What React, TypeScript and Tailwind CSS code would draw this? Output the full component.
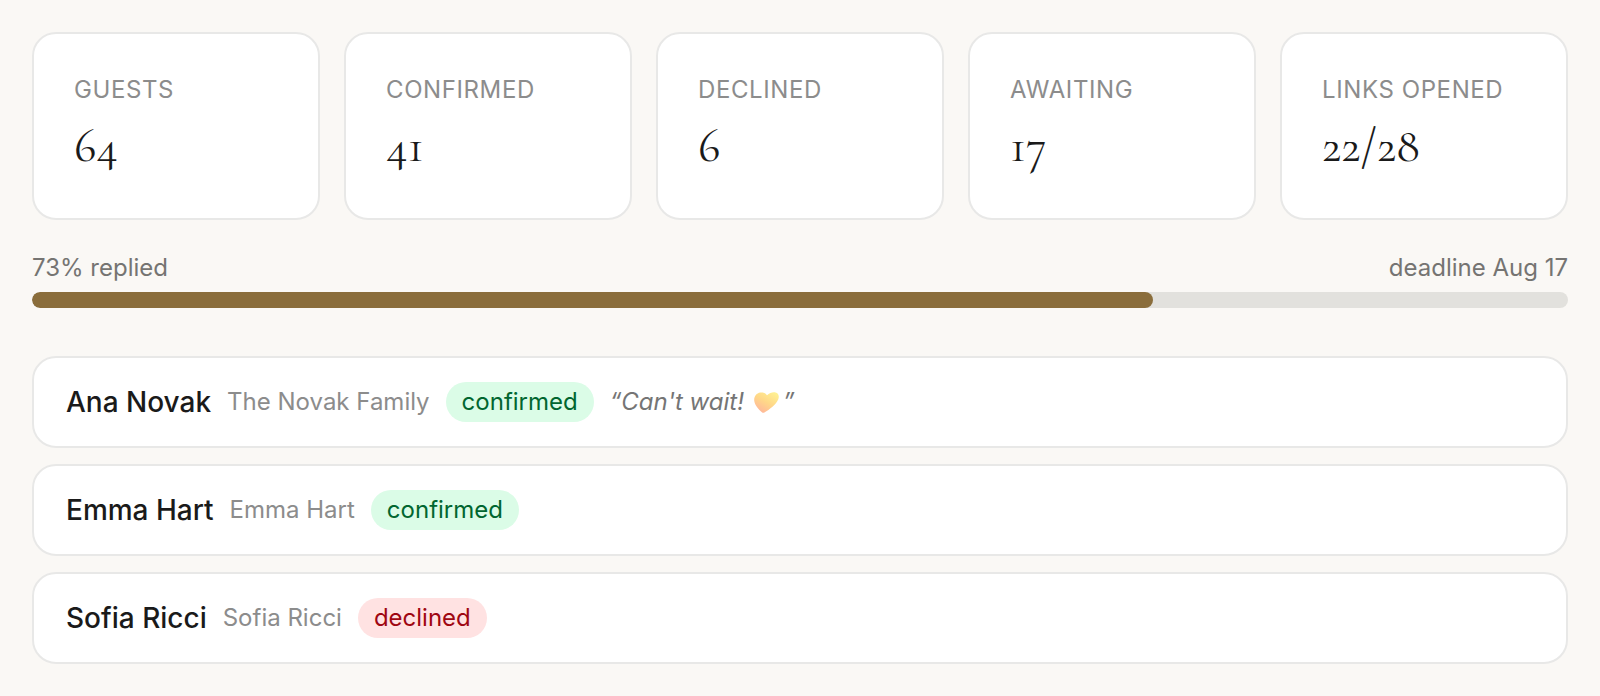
import clsx from "clsx";

type Guest = {
  name: string;
  party: string;
  status: "confirmed" | "declined";
  note?: string;
};

const stats = [
  { label: "Guests", value: "64" },
  { label: "Confirmed", value: "41" },
  { label: "Declined", value: "6" },
  { label: "Awaiting", value: "17" },
  { label: "Links opened", value: "22/28" },
];

const guests: Guest[] = [
  {
    name: "Ana Novak",
    party: "The Novak Family",
    status: "confirmed",
    note: "Can't wait!",
  },
  { name: "Emma Hart", party: "Emma Hart", status: "confirmed" },
  { name: "Sofia Ricci", party: "Sofia Ricci", status: "declined" },
];

const replied = 73;

// leans to the right like the italic text around it
const Heart: React.FC = () => (
  <svg
    viewBox="0 0 25 21"
    className="inline-block w-[25px] h-[21px] ml-[10px] mr-1 align-[-3px]"
    role="img"
    aria-label="yellow heart"
  >
    <defs>
      <linearGradient id="heart" x1="0.9" y1="0" x2="0.2" y2="1">
        <stop offset="0" stopColor="#fff394" />
        <stop offset="0.5" stopColor="#ffd888" />
        <stop offset="1" stopColor="#ffb49c" />
      </linearGradient>
    </defs>
    <path
      d="M13 3.2C15.6 0.7 18.8 -0.2 21.6 0.4C24.6 1.1 25.5 4.2 24.2 7.4C22.2 12.2 15.6 17.4 10.4 20.5C9.5 21 8.6 20.9 7.9 20.2C4.3 16.8 0.5 12.7 0.2 8.4C0 4.4 2.6 1.1 6.2 0.5C9.2 0.1 11.8 1 13 3.2Z"
      fill="url(#heart)"
    />
  </svg>
);

const StatCard: React.FC<{ label: string; value: string }> = ({
  label,
  value,
}) => (
  <div className="rounded-3xl border-2 border-[#e8e8e7] bg-white p-10">
    <dt className="text-2xl uppercase tracking-wide text-[#8c8c8c]">{label}</dt>
    <dd className="mt-2 font-['Cormorant_Garamond','Liberation_Serif',serif] text-5xl leading-16">
      {value}
    </dd>
  </div>
);

const GuestRow: React.FC<{ guest: Guest }> = ({ guest }) => (
  <li className="flex flex-wrap items-center gap-4 rounded-3xl border-2 border-[#e8e8e7] bg-white px-8 py-6">
    <span className="text-[28px] leading-10 font-medium">{guest.name}</span>
    <span className="text-2xl text-[#8c8c8c]">{guest.party}</span>
    <span
      className={clsx(
        "rounded-full px-4 py-1 text-2xl",
        guest.status === "confirmed"
          ? "bg-green-100 text-green-800"
          : "bg-red-100 text-red-800"
      )}
    >
      {guest.status}
    </span>
    {guest.note && (
      <span className="text-2xl italic text-[#757575]">
        “{guest.note}
        <Heart />”
      </span>
    )}
  </li>
);

export default function App() {
  return (
    <main className="min-h-screen bg-[#faf8f5] p-8 font-['Inter',sans-serif] text-[#1a1a1a]">
      <dl className="grid grid-cols-5 gap-6">
        {stats.map((stat) => (
          <StatCard key={stat.label} label={stat.label} value={stat.value} />
        ))}
      </dl>

      <div className="mt-8 flex justify-between text-2xl text-[#757472]">
        <span>{replied}% replied</span>
        <span>deadline Aug 17</span>
      </div>
      <div className="mt-2 h-4 overflow-hidden rounded-full bg-[#e2e1dd]">
        <div
          className="h-full rounded-full bg-[#8a6d3b]"
          style={{ width: `${replied}%` }}
        />
      </div>

      <ul className="mt-12 flex flex-col gap-4">
        {guests.map((guest) => (
          <GuestRow key={guest.name} guest={guest} />
        ))}
      </ul>
    </main>
  );
}
